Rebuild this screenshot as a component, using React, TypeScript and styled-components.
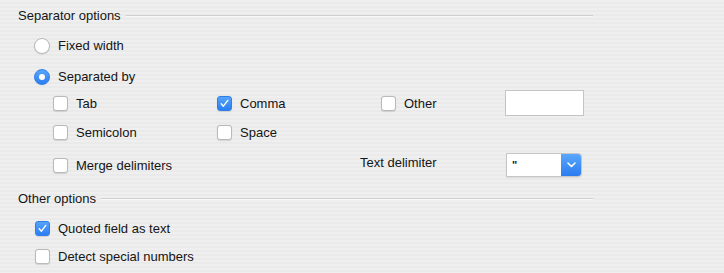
import React from "react";
import styled, { createGlobalStyle } from "styled-components";

const Global = createGlobalStyle`
  html, body { margin: 0; padding: 0; }
  body {
    width: 724px;
    height: 273px;
    overflow: hidden;
    font-family: "Liberation Sans", Arial, sans-serif;
    font-size: 13px;
    color: #151515;
    background: repeating-linear-gradient(180deg, #efefef 0px, #efefef 2px, #eaeaea 2px, #eaeaea 4px);
  }
`;

const Page = styled.div`
  padding: 7px 0 0 18px;
  width: 575px;
`;

const SectionHeader = styled.div<{ $top?: number }>`
  display: flex;
  align-items: center;
  height: 16px;
  margin-top: ${(p) => p.$top ?? 0}px;
  gap: 5px;
`;

const HeaderLine = styled.div`
  flex: 1;
  height: 1px;
  background: #cfcfcf;
  border-bottom: 1px solid #f8f8f8;
  margin-top: 1px;
`;

const RadioGroup = styled.div`
  margin: 7px 0 0 16px;
`;

const OptionRow = styled.label<{ $h: number }>`
  display: flex;
  align-items: center;
  height: ${(p) => p.$h}px;
  gap: 8px;
`;

const RadioCircle = styled.span<{ $on?: boolean }>`
  box-sizing: border-box;
  width: 16px;
  height: 16px;
  border-radius: 50%;
  display: inline-flex;
  align-items: center;
  justify-content: center;
  background: ${(p) => (p.$on ? "linear-gradient(#5aa6fa, #2b7ef1)" : "#fff")};
  border: 1px solid ${(p) => (p.$on ? "#2f7fe8" : "#b9b9b9")};
  box-shadow: 0 0.5px 1px rgba(0,0,0,0.12);
  &::after {
    content: "";
    display: ${(p) => (p.$on ? "block" : "none")};
    width: 6px;
    height: 6px;
    border-radius: 50%;
    background: #fff;
  }
`;

const Box = styled.span<{ $on?: boolean }>`
  box-sizing: border-box;
  width: 15px;
  height: 15px;
  border-radius: 3px;
  display: inline-flex;
  align-items: center;
  justify-content: center;
  flex: none;
  background: ${(p) => (p.$on ? "linear-gradient(#56a3fa, #2b7ef1)" : "#fff")};
  border: 1px solid ${(p) => (p.$on ? "#2f7fe8" : "#b9b9b9")};
  box-shadow: 0 0.5px 1px rgba(0,0,0,0.12);
`;

const Check = ({ on }: { on?: boolean }) => (
  <Box $on={on}>
    {on && (
      <svg width="11" height="11" viewBox="0 0 11 11">
        <path d="M2.2 5.8 L4.4 8.2 L8.8 2.4" fill="none" stroke="#fff" strokeWidth="1.4" strokeLinecap="round" strokeLinejoin="round" />
      </svg>
    )}
  </Box>
);

const Grid = styled.div`
  margin: -2px 0 0 35px;
  display: grid;
  grid-template-columns: 164px 164px 124px 80px;
  grid-template-rows: 26px 26px;
  row-gap: 3px;
  align-items: center;
`;

const Cell = styled.label`
  display: flex;
  align-items: center;
  gap: 8px;
`;

const TextInput = styled.div`
  box-sizing: border-box;
  width: 79px;
  height: 26px;
  background: #fff;
  border: 1px solid #c4c4c4;
`;

const DelimRow = styled.div`
  margin: 7px 0 0 35px;
  display: flex;
  align-items: center;
  height: 26px;
`;

const MergeCell = styled(Cell)`
  width: 307px;
`;

const DelimLabel = styled.span`
  width: 146px;
  margin-bottom: 6px;
`;

const Select = styled.div`
  box-sizing: border-box;
  display: flex;
  width: 76px;
  height: 24px;
  background: #fff;
  border: 1px solid #c6c6c6;
  border-radius: 0 4px 4px 0;
  overflow: hidden;
  box-shadow: 0 0.5px 1px rgba(0,0,0,0.08);
`;

const SelectValue = styled.span`
  flex: 1;
  padding-left: 5px;
  line-height: 22px;
  font-weight: bold;
  font-size: 11px;
`;

const SelectButton = styled.span`
  width: 20px;
  display: flex;
  align-items: center;
  justify-content: center;
  background: linear-gradient(#5ba7fb, #2a7cf0);
`;

const OtherGroup = styled.div`
  margin: 8px 0 0 17px;
`;

export default function App() {
  return (
    <>
      <Global />
      <Page>
        <SectionHeader>
          <span>Separator options</span>
          <HeaderLine />
        </SectionHeader>
        <RadioGroup>
          <OptionRow $h={31}>
            <RadioCircle />
            <span>Fixed width</span>
          </OptionRow>
          <OptionRow $h={31}>
            <RadioCircle $on />
            <span>Separated by</span>
          </OptionRow>
        </RadioGroup>
        <Grid>
          <Cell><Check /><span>Tab</span></Cell>
          <Cell><Check on /><span>Comma</span></Cell>
          <Cell><Check /><span>Other</span></Cell>
          <TextInput />
          <Cell><Check /><span>Semicolon</span></Cell>
          <Cell><Check /><span>Space</span></Cell>
        </Grid>
        <DelimRow>
          <MergeCell><Check /><span>Merge delimiters</span></MergeCell>
          <DelimLabel>Text delimiter</DelimLabel>
          <Select>
            <SelectValue>"</SelectValue>
            <SelectButton>
              <svg width="9" height="6" viewBox="0 0 9 6">
                <path d="M1 1 L4.5 4.5 L8 1" fill="none" stroke="#fff" strokeWidth="1.5" strokeLinecap="round" strokeLinejoin="round" />
              </svg>
            </SelectButton>
          </Select>
        </DelimRow>
        <SectionHeader $top={12}>
          <span>Other options</span>
          <HeaderLine />
        </SectionHeader>
        <OtherGroup>
          <OptionRow $h={28}>
            <Check on />
            <span>Quoted field as text</span>
          </OptionRow>
          <OptionRow $h={28}>
            <Check />
            <span>Detect special numbers</span>
          </OptionRow>
        </OtherGroup>
      </Page>
    </>
  );
}
